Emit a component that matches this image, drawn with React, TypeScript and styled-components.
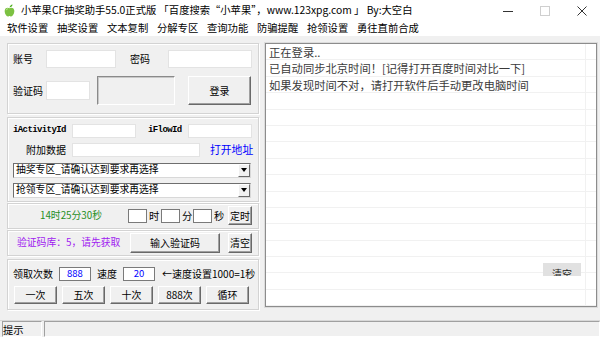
import React from 'react';
import styled, {createGlobalStyle} from 'styled-components';

const GlobalStyle = createGlobalStyle`
  html, body { margin: 0; padding: 0; }
  body {
    background: #f0f0f0;
    font-family: "Noto Sans CJK SC", "Noto Sans", sans-serif;
  }
  * { box-sizing: border-box; }
`;

const Window = styled.div`
  width: 600px;
  height: 337px;
  overflow: hidden;
  background: #f0f0f0;
  display: flex;
  flex-direction: column;
  color: #000;
  font-size: 10px;
  line-height: 1;
`;

const TitleBar = styled.div`
  height: 21px;
  flex: none;
  background: #fff;
  display: flex;
  align-items: center;
  padding-left: 4px;
`;

const TitleText = styled.div`
  margin-left: 6px;
  font-size: 10.3px;
  white-space: nowrap;
`;

const Controls = styled.div`
  margin-left: auto;
  display: flex;
`;

const Ctrl = styled.div`
  width: 37px;
  height: 21px;
  display: flex;
  align-items: center;
  justify-content: center;
`;

const MenuBar = styled.div`
  height: 15px;
  flex: none;
  background: #fff;
  display: flex;
  align-items: center;
  padding-left: 7px;
`;

const MenuItem = styled.div`
  width: 50px;
  flex: none;
  font-size: 10.3px;
  white-space: nowrap;
`;

const Body = styled.div`
  flex: 1;
  display: flex;
  padding: 7px 3px 0 7px;
  min-height: 0;
`;

const LeftCol = styled.div`
  width: 252px;
  flex: none;
  display: flex;
  flex-direction: column;
`;

const Group = styled.div<{$h: number; $mt: number; $pt?: number}>`
  height: ${p => p.$h}px;
  margin-top: ${p => p.$mt}px;
  padding: ${p => p.$pt ?? 0}px 0 0 5px;
  border: 1px solid #d3d3d3;
  box-shadow: inset 1px 1px 0 #fff, 1px 1px 0 #fff;
  display: flex;
  flex-direction: column;
`;

const Row = styled.div<{$h: number; $mt?: number}>`
  height: ${p => p.$h}px;
  margin-top: ${p => p.$mt ?? 0}px;
  display: flex;
  align-items: center;
  flex: none;
`;

const Label = styled.div<{$w?: number; $ml?: number; $right?: boolean}>`
  width: ${p => (p.$w ? `${p.$w}px` : 'auto')};
  margin-left: ${p => p.$ml ?? 0}px;
  text-align: ${p => (p.$right ? 'right' : 'left')};
  padding-right: ${p => (p.$right ? 6 : 0)}px;
  flex: none;
  white-space: nowrap;
`;

const MonoLabel = styled(Label)`
  font-family: "Liberation Mono", monospace;
  font-weight: bold;
  font-size: 9px;
  letter-spacing: -0.6px;
`;

const Field = styled.div<{$w: number; $h: number; $ml?: number; $dark?: boolean}>`
  width: ${p => p.$w}px;
  height: ${p => p.$h}px;
  margin-left: ${p => p.$ml ?? 0}px;
  flex: none;
  background: #fff;
  border: 1px solid ${p => (p.$dark ? '#7a7a7a' : '#e3e3e3')};
  color: #0000ff;
  font-size: 9.5px;
  display: flex;
  align-items: center;
  justify-content: center;
`;

const Sunken = styled.div<{$w: number; $h: number; $ml?: number}>`
  width: ${p => p.$w}px;
  height: ${p => p.$h}px;
  margin-left: ${p => p.$ml ?? 0}px;
  flex: none;
  border: 1px solid;
  border-color: #8a8a8a #fff #fff #8a8a8a;
  box-shadow: inset 1px 1px 0 #c8c8c8;
  background: #f0f0f0;
`;

const Button = styled.div<{$w: number; $h: number; $ml?: number}>`
  width: ${p => p.$w}px;
  height: ${p => p.$h}px;
  margin-left: ${p => p.$ml ?? 0}px;
  flex: none;
  border: 1px solid;
  border-color: #fff #696969 #696969 #fff;
  box-shadow: inset -1px -1px 0 #a0a0a0;
  background: #f0f0f0;
  display: flex;
  align-items: center;
  justify-content: center;
  font-size: 10px;
  white-space: nowrap;
`;

const Link = styled.div`
  margin-left: 10px;
  color: #0000ff;
  font-size: 10.8px;
`;

const Select = styled.div<{$mt: number}>`
  width: 238px;
  height: 15px;
  margin-top: ${p => p.$mt}px;
  flex: none;
  background: #fff;
  border: 1px solid;
  border-color: #6e6e6e #d8d8d8 #d8d8d8 #6e6e6e;
  display: flex;
  align-items: center;
  padding-left: 2px;
  font-size: 9.8px;
`;

const SelectText = styled.div`
  flex: 1;
  white-space: nowrap;
`;

const DropBtn = styled.div`
  width: 12px;
  height: 13px;
  border: 1px solid;
  border-color: #fff #696969 #696969 #fff;
  background: #f0f0f0;
  display: flex;
  align-items: center;
  justify-content: center;
`;

const ColorText = styled.div<{$c: string; $w: number; $ml: number}>`
  color: ${p => p.$c};
  width: ${p => p.$w}px;
  margin-left: ${p => p.$ml}px;
  flex: none;
  white-space: nowrap;
  font-size: 9.8px;
`;

const Unit = styled.div<{$w: number}>`
  width: ${p => p.$w}px;
  flex: none;
  padding-left: 2px;
  font-size: 10.3px;
`;

const ListBox = styled.div`
  flex: 1;
  height: 264px;
  margin-left: 6px;
  background: #fff;
  border: 1px solid #8c8c8c;
  box-shadow: 0 0 0 1px #dcdcdc;
  position: relative;
  overflow: hidden;
`;

const ListRow = styled.div`
  height: 16.4px;
  display: flex;
  border-bottom: 1px solid #f1f1f1;
`;

const ListCell = styled.div`
  width: 320px;
  flex: none;
  border-right: 1px solid #f1f1f1;
  padding-left: 3px;
  font-size: 11.3px;
  line-height: 16px;
  color: #3a3a3a;
  white-space: nowrap;
`;

const ClearOverlay = styled.div`
  position: absolute;
  left: 277px;
  top: 219px;
  width: 38px;
  height: 13px;
  overflow: hidden;
  background: #e1e1e1;
  text-align: center;
  padding-top: 6px;
  font-size: 10px;
  color: #222;
`;

const StatusBar = styled.div`
  height: 17px;
  flex: none;
  margin-top: 10px;
  display: flex;
  border-top: 1px solid #d8d8d8;
`;

const StatusCell = styled.div<{$w?: number}>`
  width: ${p => (p.$w ? `${p.$w}px` : 'auto')};
  flex: ${p => (p.$w ? 'none' : 1)};
  margin-left: 2px;
  border: 1px solid;
  border-color: #a0a0a0 #fff #fff #a0a0a0;
  padding: 3px 0 0 0;
  font-size: 10.3px;
  white-space: nowrap;
`;

const Apple = () => (
  <svg width="11" height="13" viewBox="0 0 11 13">
    <path d="M5.6 3.4 C5.8 1.9 6.9 0.8 8.6 0.5 C8.5 2.1 7.3 3.2 5.6 3.4Z" fill="#4caf1f" />
    <path
      d="M5.5 4.3 C4.2 3.4 1.2 3.2 0.7 6.6 C0.4 9.4 2.4 12.6 3.9 12.6 C4.7 12.6 5 12.1 5.5 12.1 C6 12.1 6.3 12.6 7.1 12.6 C8.6 12.6 10.6 9.4 10.3 6.6 C9.8 3.2 6.8 3.4 5.5 4.3Z"
      fill="#7cc142"
    />
    <path d="M2.2 6.2 C2.5 5.2 3.2 4.8 4 4.8" stroke="#c8eba3" strokeWidth="0.9" fill="none" />
  </svg>
);

const Arrow = () => (
  <svg width="6" height="4" viewBox="0 0 6 4"><path d="M0 0H6L3 4Z" fill="#000" /></svg>
);

const menus = ['软件设置', '抽奖设置', '文本复制', '分解专区', '查询功能', '防骗提醒', '抢领设置', '勇往直前合成'];

const logs = [
  '正在登录..',
  '已自动同步北京时间！[记得打开百度时间对比一下]',
  '如果发现时间不对，请打开软件后手动更改电脑时间',
];

export default function App() {
  const rows = Array.from({length: 17}, (_, i) => logs[i] ?? '');
  return (
    <Window>
      <GlobalStyle />
      <TitleBar>
        <Apple />
        <TitleText>小苹果CF抽奖助手55.0正式版 「百度搜索“小苹果”，www.123xpg.com 」 By:大空白</TitleText>
        <Controls>
          <Ctrl>
            <svg width="10" height="10" viewBox="0 0 10 10"><path d="M0 5.5H10" stroke="#333" strokeWidth="1" /></svg>
          </Ctrl>
          <Ctrl>
            <svg width="10" height="10" viewBox="0 0 10 10"><rect x="0.5" y="0.5" width="9" height="9" stroke="#cfcfcf" fill="none" /></svg>
          </Ctrl>
          <Ctrl>
            <svg width="10" height="10" viewBox="0 0 10 10"><path d="M0.5 0.5L9.5 9.5M9.5 0.5L0.5 9.5" stroke="#333" strokeWidth="1" /></svg>
          </Ctrl>
        </Controls>
      </TitleBar>
      <MenuBar>
        {menus.map(m => <MenuItem key={m}>{m}</MenuItem>)}
      </MenuBar>
      <Body>
        <LeftCol>
          <Group $h={72} $mt={0} $pt={6}>
            <Row $h={18}>
              <Label $w={33}>账号</Label>
              <Field $w={70} $h={18} />
              <Label $w={38} $ml={14}>密码</Label>
              <Field $w={84} $h={18} />
            </Row>
            <Row $h={29} $mt={8}>
              <Label $w={33}>验证码</Label>
              <Field $w={44} $h={19} />
              <Sunken $w={78} $h={29} $ml={7} />
              <Button $w={63} $h={29} $ml={13}>登录</Button>
            </Row>
          </Group>
          <Group $h={87} $mt={3} $pt={6}>
            <Row $h={14}>
              <MonoLabel $w={59}>iActivityId</MonoLabel>
              <Field $w={64} $h={14} />
              <MonoLabel $w={40} $ml={12}>iFlowId</MonoLabel>
              <Field $w={64} $h={14} />
            </Row>
            <Row $h={14} $mt={5}>
              <Label $w={59} $right>附加数据</Label>
              <Field $w={128} $h={14} />
              <Link>打开地址</Link>
            </Row>
            <Select $mt={6}>
              <SelectText>抽奖专区_请确认达到要求再选择</SelectText>
              <DropBtn><Arrow /></DropBtn>
            </Select>
            <Select $mt={5}>
              <SelectText>抢领专区_请确认达到要求再选择</SelectText>
              <DropBtn><Arrow /></DropBtn>
            </Select>
          </Group>
          <Group $h={26} $mt={1}>
            <Row $h={24}>
              <ColorText $c="#1f8f1f" $w={88} $ml={27}>14时25分30秒</ColorText>
              <Field $w={19} $h={14} $dark />
              <Unit $w={14}>时</Unit>
              <Field $w={19} $h={14} $dark />
              <Unit $w={13}>分</Unit>
              <Field $w={19} $h={14} $dark />
              <Unit $w={16}>秒</Unit>
              <Button $w={24} $h={19}>定时</Button>
            </Row>
          </Group>
          <Group $h={26} $mt={1}>
            <Row $h={24}>
              <ColorText $c="#a020f0" $w={113} $ml={4}>验证码库：5，请先获取</ColorText>
              <Button $w={90} $h={20}>输入验证码</Button>
              <Button $w={24} $h={20} $ml={8}>清空</Button>
            </Row>
          </Group>
          <Group $h={52} $mt={3} $pt={7}>
            <Row $h={14}>
              <Label $w={46}>领取次数</Label>
              <Field $w={32} $h={14} $dark>888</Field>
              <Label $w={26} $ml={6}>速度</Label>
              <Field $w={32} $h={14} $dark>20</Field>
              <Label $ml={7}>←速度设置1000=1秒</Label>
            </Row>
            <Row $h={18} $mt={5}>
              <Button $w={43} $h={18} $ml={1}>一次</Button>
              <Button $w={43} $h={18} $ml={5}>五次</Button>
              <Button $w={43} $h={18} $ml={5}>十次</Button>
              <Button $w={43} $h={18} $ml={5}>888次</Button>
              <Button $w={43} $h={18} $ml={5}>循环</Button>
            </Row>
          </Group>
        </LeftCol>
        <ListBox>
          {rows.map((t, i) => (
            <ListRow key={i}>
              <ListCell>{t}</ListCell>
            </ListRow>
          ))}
          <ClearOverlay>清空</ClearOverlay>
        </ListBox>
      </Body>
      <StatusBar>
        <StatusCell $w={40}>提示</StatusCell>
        <StatusCell />
      </StatusBar>
    </Window>
  );
}
